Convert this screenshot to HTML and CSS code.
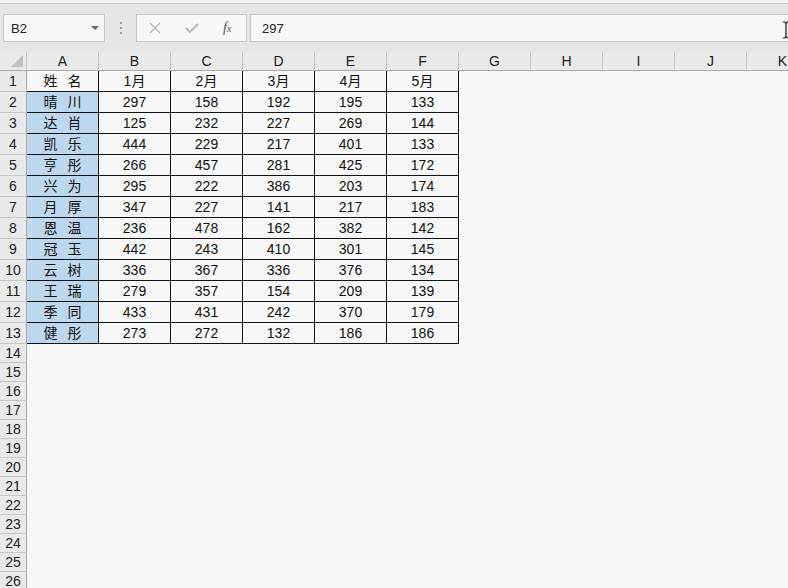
FILE: index.html
```html
<!DOCTYPE html>
<html>
<head>
  <title>Sheet</title>
  <link rel="stylesheet" href="styles.css">
</head>
<body>
  <div class="toolbar">
    <div class="top-strip"></div>
    <div class="formula-bar">
      <div class="name-box">
        <span>B2</span>
        <span class="drop-arrow"></span>
      </div>
      <div class="grip"><i></i><i></i><i></i></div>
      <div class="fx-buttons">
        <svg class="icon" width="12" height="12" viewBox="0 0 12 12"><path d="M1 1 L11 11 M11 1 L1 11" stroke="#b5b5b5" stroke-width="1.3" fill="none"/></svg>
        <svg class="icon" width="14" height="12" viewBox="0 0 14 12"><path d="M1 6 L5 10 L13 2" stroke="#b5b5b5" stroke-width="1.8" fill="none"/></svg>
        <span class="fx">f<small>x</small></span>
      </div>
      <div class="formula-input">297</div>
    </div>
  </div>

  <div class="sheet">
    <div class="col-head">
      <div class="corner"><span class="tri"></span></div>
      <div>A</div><div>B</div><div>C</div><div>D</div><div>E</div><div>F</div>
      <div>G</div><div>H</div><div>I</div><div>J</div><div>K</div>
    </div>

    <div class="row data"><div class="rh">1</div><div class="nm head">姓 名</div><div>1月</div><div>2月</div><div>3月</div><div>4月</div><div>5月</div></div>
    <div class="row data"><div class="rh">2</div><div class="nm">晴 川</div><div>297</div><div>158</div><div>192</div><div>195</div><div>133</div></div>
    <div class="row data"><div class="rh">3</div><div class="nm">达 肖</div><div>125</div><div>232</div><div>227</div><div>269</div><div>144</div></div>
    <div class="row data"><div class="rh">4</div><div class="nm">凯 乐</div><div>444</div><div>229</div><div>217</div><div>401</div><div>133</div></div>
    <div class="row data"><div class="rh">5</div><div class="nm">亨 彤</div><div>266</div><div>457</div><div>281</div><div>425</div><div>172</div></div>
    <div class="row data"><div class="rh">6</div><div class="nm">兴 为</div><div>295</div><div>222</div><div>386</div><div>203</div><div>174</div></div>
    <div class="row data"><div class="rh">7</div><div class="nm">月 厚</div><div>347</div><div>227</div><div>141</div><div>217</div><div>183</div></div>
    <div class="row data"><div class="rh">8</div><div class="nm">恩 温</div><div>236</div><div>478</div><div>162</div><div>382</div><div>142</div></div>
    <div class="row data"><div class="rh">9</div><div class="nm">冠 玉</div><div>442</div><div>243</div><div>410</div><div>301</div><div>145</div></div>
    <div class="row data"><div class="rh">10</div><div class="nm">云 树</div><div>336</div><div>367</div><div>336</div><div>376</div><div>134</div></div>
    <div class="row data"><div class="rh">11</div><div class="nm">王 瑞</div><div>279</div><div>357</div><div>154</div><div>209</div><div>139</div></div>
    <div class="row data"><div class="rh">12</div><div class="nm">季 同</div><div>433</div><div>431</div><div>242</div><div>370</div><div>179</div></div>
    <div class="row data"><div class="rh">13</div><div class="nm">健 彤</div><div>273</div><div>272</div><div>132</div><div>186</div><div>186</div></div>

    <div class="row empty"><div class="rh">14</div></div>
    <div class="row empty"><div class="rh">15</div></div>
    <div class="row empty"><div class="rh">16</div></div>
    <div class="row empty"><div class="rh">17</div></div>
    <div class="row empty"><div class="rh">18</div></div>
    <div class="row empty"><div class="rh">19</div></div>
    <div class="row empty"><div class="rh">20</div></div>
    <div class="row empty"><div class="rh">21</div></div>
    <div class="row empty"><div class="rh">22</div></div>
    <div class="row empty"><div class="rh">23</div></div>
    <div class="row empty"><div class="rh">24</div></div>
    <div class="row empty"><div class="rh">25</div></div>
    <div class="row empty"><div class="rh">26</div></div>
  </div>

  <!-- text cursor over the formula bar -->
  <svg class="ibeam" width="8" height="18" viewBox="0 0 8 18"><path d="M1 1 H3 M5 1 H7 M4 1 V17 M1 17 H3 M5 17 H7 M3 1.5 L4 2.5 L5 1.5 M3 16.5 L4 15.5 L5 16.5" stroke="#111" stroke-width="1.2" fill="none"/></svg>
</body>
</html>
```

FILE: styles.css
```css
* {
  box-sizing: border-box;
}

body {
  margin: 0;
  width: 788px;
  height: 588px;
  overflow: hidden;
  background: #f7f7f7;
  font-family: 'Liberation Sans', 'Noto Sans CJK SC', sans-serif;
  font-size: 14px;
  color: #111;
  position: relative;
}

.toolbar {
  background: #e6e6e6;
}

.top-strip {
  height: 4px;
  background: #f0f0f0;
  border-bottom: 1px solid #c8c8c8;
}

.formula-bar {
  display: flex;
  align-items: stretch;
  height: 48px;
  padding: 10px 0 10px 3px;
}

.name-box {
  width: 102px;
  background: #f7f7f7;
  border: 1px solid #c6c6c6;
  display: flex;
  align-items: center;
  justify-content: space-between;
  padding: 0 5px 0 7px;
  font-size: 13px;
  color: #222;
}

.drop-arrow {
  width: 0;
  height: 0;
  border-left: 4px solid transparent;
  border-right: 4px solid transparent;
  border-top: 4px solid #6a6a6a;
}

.grip {
  width: 31px;
  display: flex;
  flex-direction: column;
  align-items: center;
  justify-content: center;
  gap: 3px;
}

.grip i {
  width: 2px;
  height: 2px;
  background: #9a9a9a;
}

.fx-buttons {
  width: 111px;
  background: #f7f7f7;
  border: 1px solid #c6c6c6;
  display: flex;
  align-items: center;
  padding-left: 12px;
  gap: 24px;
}

.fx {
  font-family: 'Liberation Serif', serif;
  font-style: italic;
  font-size: 14px;
  color: #555;
}

.fx small {
  font-size: 10px;
}

.formula-input {
  flex: 1;
  margin-left: 3px;
  background: #f7f7f7;
  border: 1px solid #c6c6c6;
  border-right: none;
  display: flex;
  align-items: center;
  padding-left: 11px;
  font-size: 13px;
  color: #222;
}

.col-head,
.row {
  display: grid;
  grid-template-columns: 27px repeat(11, 72px);
}

.col-head {
  height: 19px;
  background: #e9e9e9;
  border-bottom: 1px solid #ababab;
}

.col-head div {
  border-right: 1px solid #c6c6c6;
  text-align: center;
  line-height: 18px;
  color: #222;
}

.corner {
  position: relative;
}

.tri {
  position: absolute;
  right: 3px;
  bottom: 3px;
  width: 0;
  height: 0;
  border-left: 12px solid transparent;
  border-bottom: 12px solid #c0c0c0;
}

.row {
  height: 21px;
}

.row.empty {
  height: 19px;
}

.row div {
  text-align: center;
  line-height: 20px;
}

.rh {
  background: #e9e9e9;
  border-right: 1px solid #ababab;
  border-bottom: 1px solid #c6c6c6;
  color: #222;
}

.row.empty .rh {
  line-height: 18px;
}

.data div:not(.rh) {
  border-right: 1px solid #111;
  border-bottom: 1px solid #111;
}

.data .nm {
  background: #bdd7ee;
  word-spacing: 6px;
}

.data .nm.head {
  background: transparent;
}

.ibeam {
  position: absolute;
  left: 782px;
  top: 21px;
}
```
